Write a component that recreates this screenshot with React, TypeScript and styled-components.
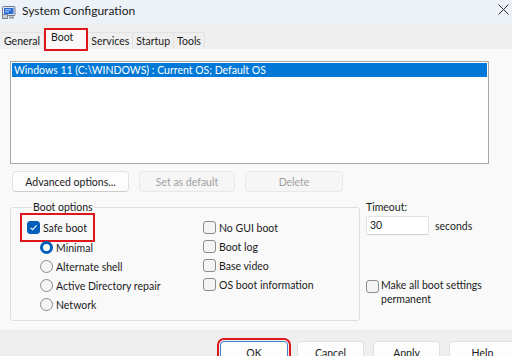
import * as React from 'react';
import styled, { createGlobalStyle, css } from 'styled-components';

const palette = {
  text: '#1b1b1b',
  disabled: '#a0a0a0',
  titleBar: '#edf2f9',
  strip: '#efefef',
  panel: '#f9f9f9',
  line: '#dedede',
  accent: '#005fb8',
  selection: '#0078d7',
  marker: '#e0161d',
};

const GlobalStyle = createGlobalStyle`
  html, body {
    margin: 0;
    padding: 0;
    width: 512px;
    height: 356px;
    overflow: hidden;
    background: ${palette.panel};
  }
  body {
    font-family: Lato, "Liberation Sans", sans-serif;
    font-size: 10.5px;
    color: ${palette.text};
  }
  * {
    box-sizing: border-box;
  }
`;

const tabs = ['General', 'Boot', 'Services', 'Startup', 'Tools'];
const leftRadios = ['Alternate shell', 'Active Directory repair', 'Network'];
const rightChecks = ['No GUI boot', 'Boot log', 'Base video', 'OS boot information'];

function AppIcon() {
  return (
    <svg width="14" height="13" viewBox="0 0 14 13">
      <rect x="0.5" y="0.5" width="12.5" height="9" rx="1" fill="#dfe6ee" stroke="#6d7c90" />
      <rect x="2" y="2" width="9.5" height="6" fill="#2c6bd3" />
      <path d="M3 3.8h6M3 5.8h4" stroke="#bcd8ff" strokeWidth="0.9" />
      <rect x="0.5" y="8.5" width="5" height="4" fill="#c9d0d8" stroke="#7d8795" />
      <rect x="7" y="10.5" width="5" height="2" fill="#8d98a6" />
    </svg>
  );
}

function CheckBox({ checked }: { checked?: boolean }) {
  return (
    <Box checked={checked}>
      {checked && (
        <svg width="9" height="9" viewBox="0 0 9 9">
          <path d="M1.6 4.8 L3.6 6.7 L7.6 2.4" fill="none" stroke="#fff" strokeWidth="1.1" />
        </svg>
      )}
    </Box>
  );
}

const App: React.FC = () => {
  return (
    <>
      <GlobalStyle />
      <Window>
        <TitleBar>
          <AppIcon />
          <Title>System Configuration</Title>
          <CloseButton>
            <svg width="11" height="11" viewBox="0 0 11 11">
              <path d="M0.5 0.5 L10.5 10.5 M10.5 0.5 L0.5 10.5" stroke="#2b2b2b" strokeWidth="1" />
            </svg>
          </CloseButton>
        </TitleBar>

        <TabStrip>
          {tabs.map((tab) => (
            <Tab key={tab} active={tab === 'Boot'}>
              {tab}
            </Tab>
          ))}
        </TabStrip>

        <Panel>
          <ListBox>
            <ListItem selected>Windows 11 (C:\WINDOWS) : Current OS; Default OS</ListItem>
          </ListBox>

          <ButtonRow>
            <Button width={117}>Advanced options...</Button>
            <Button width={96} disabled>
              Set as default
            </Button>
            <Button width={98} disabled>
              Delete
            </Button>
          </ButtonRow>

          <OptionsRow>
            <GroupBox>
              <Legend>Boot options</Legend>
              <OptionsGrid>
                <Column>
                  <Option marked>
                    <CheckBox checked />
                    Safe boot
                  </Option>
                  <Option indent first>
                    <Radio checked />
                    Minimal
                  </Option>
                  {leftRadios.map((label) => (
                    <Option key={label} indent>
                      <Radio />
                      {label}
                    </Option>
                  ))}
                </Column>
                <Column>
                  {rightChecks.map((label) => (
                    <Option key={label}>
                      <CheckBox />
                      {label}
                    </Option>
                  ))}
                </Column>
              </OptionsGrid>
            </GroupBox>

            <TimeoutColumn>
              <FieldLabel>Timeout:</FieldLabel>
              <TimeoutRow>
                <TextInput>30</TextInput>
                <span>seconds</span>
              </TimeoutRow>
              <PermanentOption>
                <CheckBox />
                <PermanentText>Make all boot settings permanent</PermanentText>
              </PermanentOption>
            </TimeoutColumn>
          </OptionsRow>
        </Panel>

        <Footer>
          <Button width={68} height={23} isDefault marked>
            OK
          </Button>
          <Button width={67} height={23}>
            Cancel
          </Button>
          <Button width={67} height={23}>
            Apply
          </Button>
          <Button width={67} height={23}>
            Help
          </Button>
        </Footer>
      </Window>
    </>
  );
};

const Window = styled.div`
  width: 512px;
  height: 372px;
  display: flex;
  flex-direction: column;
  background: ${palette.panel};
`;

const TitleBar = styled.div`
  height: 24px;
  flex: none;
  display: flex;
  align-items: center;
  padding-left: 2px;
  background: ${palette.titleBar};
  svg {
    flex: none;
  }
`;

const Title = styled.div`
  margin-left: 6px;
  font-size: 12px;
  color: #1a1a1a;
  margin-top: -4px;
`;

const CloseButton = styled.div`
  margin-left: auto;
  margin-right: 3px;
  margin-top: -5px;
  width: 11px;
  height: 11px;
  display: flex;
`;

const TabStrip = styled.div`
  height: 25px;
  flex: none;
  display: flex;
  align-items: flex-end;
  padding-left: 1px;
  background: ${palette.strip};
`;

const Tab = styled.div<{ active?: boolean }>`
  height: 17px;
  padding: 0 3px;
  display: flex;
  align-items: center;
  background: ${palette.strip};
  border: 1px solid #e2e2e2;
  border-bottom: none;
  margin-left: -1px;
  ${(p) =>
    p.active &&
    css`
      height: 23px;
      padding: 0 13px 5px 5px;
      margin: 0 0 -2px 0;
      background: ${palette.panel};
      border: 2px solid ${palette.marker};
      position: relative;
      z-index: 1;
    `}
  &:first-child {
    border-left: none;
    margin-left: 0;
  }
`;

const Panel = styled.div`
  height: 281px;
  flex: none;
  padding: 12px 23px 0 10px;
  background: ${palette.panel};
`;

const ListBox = styled.div`
  height: 103px;
  padding: 1px;
  background: #fff;
  border: 1px solid #a8a8a8;
`;

const ListItem = styled.div<{ selected?: boolean }>`
  height: 14px;
  line-height: 14px;
  padding-left: 2px;
  white-space: nowrap;
  ${(p) =>
    p.selected &&
    css`
      background: ${palette.selection};
      color: #fff;
    `}
`;

const ButtonRow = styled.div`
  display: flex;
  gap: 10px;
  margin: 7px 0 0 2px;
`;

const Button = styled.button<{ width: number; height?: number; isDefault?: boolean; marked?: boolean }>`
  width: ${(p) => p.width}px;
  height: ${(p) => p.height ?? 21}px;
  flex: none;
  padding: 0;
  font: inherit;
  color: ${palette.text};
  background: #fdfdfd;
  border: 1px solid #e1e1e1;
  border-bottom-color: #cdcdcd;
  border-radius: 4px;
  &:disabled {
    color: ${palette.disabled};
    background: #f6f6f6;
    border-color: #e9e9e9;
  }
  ${(p) =>
    p.isDefault &&
    css`
      border: 1px solid #3f7fd0;
    `}
  ${(p) =>
    p.marked &&
    css`
      outline: 2px solid ${palette.marker};
      outline-offset: 1px;
    `}
`;

const OptionsRow = styled.div`
  display: flex;
  gap: 6px;
  margin-top: 8px;
`;

const GroupBox = styled.fieldset`
  width: 350px;
  margin: 0;
  padding: 4px 0 6px 16px;
  border: 1px solid ${palette.line};
  border-radius: 3px;
`;

const Legend = styled.legend`
  padding: 0 1px;
  margin-left: 5px;
  line-height: 14px;
`;

const OptionsGrid = styled.div`
  display: grid;
  grid-template-columns: 176px 1fr;
`;

const Column = styled.div`
  display: flex;
  flex-direction: column;
`;

const Option = styled.div<{ indent?: boolean; first?: boolean; marked?: boolean }>`
  height: 19px;
  display: flex;
  align-items: center;
  gap: 3px;
  white-space: nowrap;
  align-self: flex-start;
  margin-left: ${(p) => (p.indent ? 13 : 0)}px;
  margin-top: ${(p) => (p.first ? 1 : 0)}px;
  ${(p) =>
    p.marked &&
    css`
      outline: 2px solid ${palette.marker};
      outline-offset: 5px;
      height: 15px;
      padding-right: 1px;
      margin: 2px 0 2px;
    `}
`;

const Box = styled.span<{ checked?: boolean }>`
  width: 13px;
  height: 13px;
  flex: none;
  display: flex;
  align-items: center;
  justify-content: center;
  border-radius: 3px;
  border: 1px solid ${(p) => (p.checked ? palette.accent : '#8c8c8c')};
  background: ${(p) => (p.checked ? palette.accent : '#f4f4f4')};
`;

const Radio = styled.span<{ checked?: boolean }>`
  width: 13px;
  height: 13px;
  flex: none;
  border-radius: 50%;
  ${(p) =>
    p.checked
      ? css`
          border: 3.5px solid ${palette.accent};
          background: #fff;
        `
      : css`
          border: 1px solid #8c8c8c;
          background: #f4f4f4;
        `}
`;

const TimeoutColumn = styled.div`
  display: flex;
  flex-direction: column;
`;

const FieldLabel = styled.div`
  line-height: 14px;
`;

const TimeoutRow = styled.div`
  display: flex;
  align-items: center;
  gap: 6px;
  margin-top: 2px;
`;

const TextInput = styled.div`
  width: 63px;
  height: 19px;
  padding-left: 3px;
  line-height: 17px;
  background: #fff;
  border: 1px solid #e3e3e3;
  border-bottom-color: #cfcfcf;
  border-radius: 2px;
`;

const PermanentOption = styled.div`
  display: flex;
  align-items: flex-start;
  gap: 2px;
  margin-top: 45px;
`;

const PermanentText = styled.div`
  width: 108px;
  line-height: 13.5px;
  margin-top: -1px;
`;

const Footer = styled.div`
  flex: 1;
  display: flex;
  gap: 9px;
  padding: 10px 0 0 220px;
  background: ${palette.strip};
  border-top: 1px solid #e9e9e9;
`;

export default App;
